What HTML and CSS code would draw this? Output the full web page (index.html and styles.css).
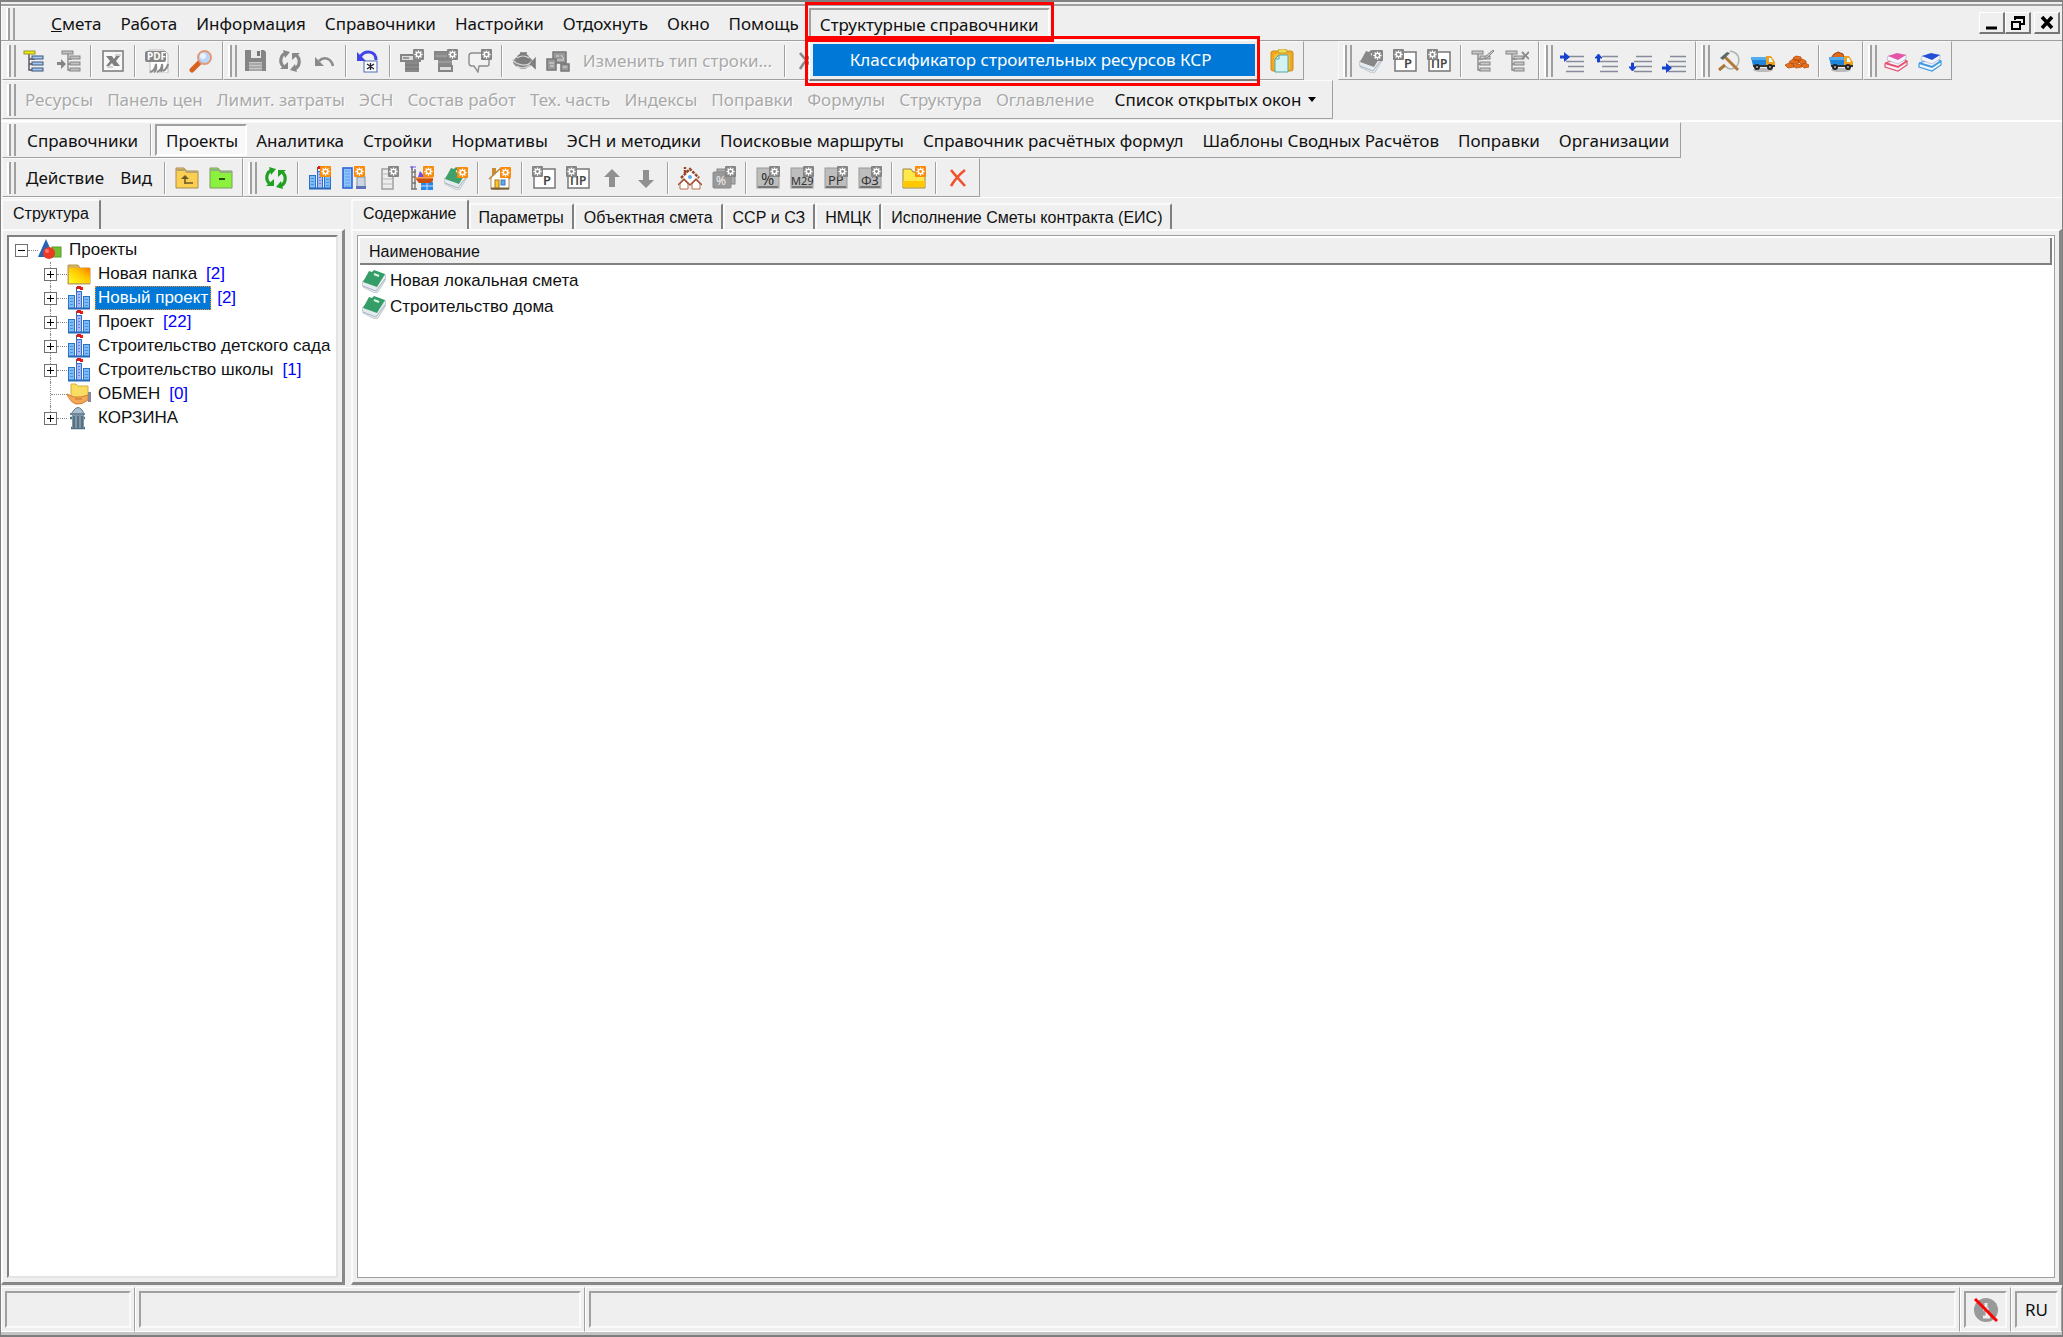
FILE: index.html
```html
<!DOCTYPE html>
<html lang="ru">
<head>
<meta charset="utf-8">
<title>Проекты</title>
<link rel="stylesheet" href="styles.css">
</head>
<body>
<svg class="sprite" aria-hidden="true">
  <symbol id="gear" viewBox="0 0 12 12"><rect width="12" height="12" rx="1" fill="#fa8a0a"/><path d="M6 1.5v9M1.5 6h9M2.8 2.8l6.4 6.4M9.2 2.8L2.8 9.2" stroke="#fff" stroke-width="1.4"/><circle cx="6" cy="6" r="2.3" fill="#fa8a0a" stroke="#fff" stroke-width="1.5"/></symbol>
  <symbol id="gear-g" viewBox="0 0 12 12"><rect width="12" height="12" rx="1" fill="#858585"/><path d="M6 1.5v9M1.5 6h9M2.8 2.8l6.4 6.4M9.2 2.8L2.8 9.2" stroke="#fff" stroke-width="1.4"/><circle cx="6" cy="6" r="2.3" fill="#858585" stroke="#fff" stroke-width="1.5"/></symbol>
  <symbol id="tree" viewBox="0 0 24 24"><path d="M6 5v16h6M6 10h6M6 15h6" fill="none" stroke="#555" stroke-width="1.4"/><rect x="1" y="2" width="11" height="3" fill="#f0e800" stroke="#98982a"/><g fill="#a8c8f0" stroke="#38557c"><rect x="9" y="7" width="11" height="3"/><rect x="9" y="13" width="11" height="3"/><rect x="9" y="19" width="11" height="3"/></g></symbol>
  <symbol id="tree-in" viewBox="0 0 24 24"><path d="M11 5v16h4M11 10h4M11 15h4" fill="none" stroke="#8a8a8a" stroke-width="1.4"/><g fill="#c0c0c0" stroke="#858585"><rect x="5" y="2" width="11" height="3"/><rect x="13" y="7" width="10" height="3"/><rect x="13" y="13" width="10" height="3"/><rect x="13" y="19" width="10" height="3"/></g><path d="M0 13h4v-3l5 5-5 5v-4H0z" fill="#858585"/></symbol>
  <symbol id="xls" viewBox="0 0 24 24"><rect x="2" y="2" width="20" height="20" fill="#f8f8f8" stroke="#808080" stroke-width="1.6"/><path d="M5 7h6l2 3 2-3h4l-4 5 4 5h-6l-2-3-3 3H5l4-5z" fill="#808080"/><path d="M14 6h6M6 18h6" stroke="#aaa"/></symbol>
  <symbol id="pdf" viewBox="0 0 24 24"><path d="M4 1h15l4 4v19H5V12H4z" fill="#fff" stroke="#bbb"/><rect x="0" y="2" width="21" height="11" rx="2" fill="#858585"/><text x="2" y="11" font-size="10" font-weight="700" fill="#fff">PDF</text><path d="M5 23q5-1 6-8 1 7-2 8M12 23q5-2 5-8 1 5-1 8M18 22q4-2 5-7" fill="none" stroke="#8a8a8a" stroke-width="2"/></symbol>
  <symbol id="find" viewBox="0 0 24 24"><path d="M3 21l8-8" stroke="#d9621e" stroke-width="5" stroke-linecap="round"/><circle cx="15.500" cy="8.500" r="6.500" fill="#bcd6fb" stroke="#e09a7a" stroke-width="2"/><circle cx="14" cy="7" r="3" fill="#e8f2ff"/></symbol>
  <symbol id="save" viewBox="0 0 24 24"><path d="M1 1h19l2 2v19H1z" fill="#858585"/><path d="M7 1h10v8H7z" fill="#e8e8e8"/><path d="M13 2h3v5h-3z" fill="#777"/><path d="M5 13h13v9H5z" fill="#c8c8c8"/><path d="M5 15h13M5 18h13M5 21h13" stroke="#888"/></symbol>
  <symbol id="cycle" viewBox="0 0 24 24"><path d="M8 4C2 6 1 14 6 18M16 20c6-2 7-10 2-14" fill="none" stroke="currentColor" stroke-width="3.200"/><path d="M5 1l7 2-5 6zM19 23l-7-2 5-6zM2 20h8v-7zM22 4h-8v7z" fill="currentColor"/></symbol>
  <symbol id="undo" viewBox="0 0 24 24"><path d="M7 12c5-5 12-3 14 5" fill="none" stroke="#8a8a8a" stroke-width="2.600"/><path d="M3 8v9h9z" fill="#8a8a8a"/></symbol>
  <symbol id="undo-doc" viewBox="0 0 24 24"><path d="M4 8c5-8 16-6 16 3" fill="none" stroke="#4343ea" stroke-width="3"/><path d="M1 3v9h9z" fill="#4343ea"/><rect x="8" y="12" width="13" height="11" fill="#fff" stroke="#4d6cb5"/><path d="M14.500 14v7M11 15l7 5M18 15l-7 5" stroke="#223" stroke-width="1.300"/></symbol>
  <symbol id="rows-top" viewBox="0 0 24 24"><rect x="1" y="6" width="19" height="6" fill="#ddd" stroke="#858585" stroke-width="2"/><path d="M3 9h6" stroke="#555"/><path d="M5 13h14v10H5z" fill="#8a8a8a"/><path d="M5 16h14M5 20h14" stroke="#777"/><use href="#gear-g" x="13" y="0" width="11" height="11"/></symbol>
  <symbol id="rows-bot" viewBox="0 0 24 24"><rect x="1" y="3" width="19" height="7" fill="#8a8a8a" stroke="#858585" stroke-width="2"/><path d="M4 11h14v6H4z" fill="#8a8a8a"/><path d="M1 7h19M4 13h14" stroke="#aaa"/><rect x="5" y="17" width="13" height="5" fill="#ddd" stroke="#858585" stroke-width="2"/><use href="#gear-g" x="13" y="0" width="11" height="11"/></symbol>
  <symbol id="note" viewBox="0 0 24 24"><path d="M4 4h15q2 0 2 2v9q0 2-2 2h-8l-1 6-4-6H4q-3 0-3-3V7q0-3 3-3z" fill="#f2f2f2" stroke="#8c8c8c" stroke-width="1.400"/><use href="#gear-g" x="13" y="0" width="11" height="11"/></symbol>
  <symbol id="planet" viewBox="0 0 24 24"><ellipse cx="11" cy="13" rx="10" ry="6" fill="#8c8c8c"/><ellipse cx="11" cy="12" rx="7" ry="8" fill="#7d7d7d"/><path d="M0 11q11 9 20 2M5 9q6-4 12 0M5 17q6 4 13-1" fill="none" stroke="#d6d6d6" stroke-width="1.200"/><path d="M19 15l4-5v9zM8 4h7" fill="#888" stroke="#777" stroke-width="1.500"/></symbol>
  <symbol id="blocks" viewBox="0 0 24 24"><g fill="#999" stroke="#777" stroke-width="1.500"><rect x="7" y="3" width="13" height="11"/><rect x="1" y="10" width="9" height="11"/><rect x="15" y="15" width="8" height="7"/></g><path d="M10 7h3M15 6l3 4M11 11h7M3 14h5M4 17h4M17 18h4" stroke="#ddd"/></symbol>
  <symbol id="cross" viewBox="0 0 24 24"><path d="M5 4q4 5 14 16M19 4Q11 10 5 20" fill="none" stroke="currentColor" stroke-width="2.600"/></symbol>
  <symbol id="clip" viewBox="0 0 24 24"><rect x="1" y="2" width="22" height="20" rx="2" fill="#f3a81c" stroke="#c98b1a"/><path d="M4 5h16v15H4z" fill="#f8bd38"/><rect x="8" y="0" width="9" height="4" rx="2" fill="#f2dc55" stroke="#c5a734"/><path d="M9 6h9v17H5V10z" fill="#d3f3f2" stroke="#57a3a6"/><path d="M5 10h4V6" fill="none" stroke="#57a3a6"/></symbol>
  <symbol id="book-shape" viewBox="0 0 24 24"><path d="M0 13l3-3 12 6 8-11 1 5-8 13-3 1-12-6z" fill="#e6ebef" stroke="#b4bec8" stroke-width=".8"/><path d="M1 17l13 5 9-12" fill="none" stroke="#a9b4c0"/><path d="M7 2l3 1 2-2 11 4-8 13-14-5z" fill="currentColor"/><path d="M12 5l5 2" stroke="#d9f5e4" stroke-width="2"/></symbol>
  <symbol id="book-new" viewBox="0 0 24 24"><use href="#book-shape" width="24" height="24"/><use href="#gear" x="13" y="1" width="11" height="11"/></symbol>
  <symbol id="book-new-g" viewBox="0 0 24 24"><use href="#book-shape" width="24" height="24"/><use href="#gear-g" x="13" y="1" width="11" height="11"/></symbol>
  <symbol id="p" viewBox="0 0 24 24"><rect x="2" y="3" width="21" height="19" fill="#fff" stroke="#777" stroke-width="1.500"/><text x="11" y="19" font-size="13" font-weight="600" fill="#444">Р</text><use href="#gear-g" width="11" height="11"/></symbol>
  <symbol id="pr" viewBox="0 0 24 24"><rect x="2" y="3" width="21" height="19" fill="#fff" stroke="#777" stroke-width="1.500"/><text x="4" y="19" font-size="12" font-weight="600" fill="#444">ПР</text><use href="#gear-g" width="11" height="11"/></symbol>
  <symbol id="tree-g" viewBox="0 0 24 24"><path d="M7 5v16h5M7 10h5M7 15h5" fill="none" stroke="#8a8a8a" stroke-width="1.400"/><g fill="#c8c8c8" stroke="#858585"><rect x="1" y="2" width="11" height="3"/><rect x="9" y="7" width="10" height="3"/><rect x="9" y="13" width="10" height="3"/><rect x="9" y="19" width="10" height="3"/></g></symbol>
  <symbol id="tree-edit" viewBox="0 0 24 24"><use href="#tree-g" width="24" height="24"/><path d="M13 10l2-3 7-6 1 1-7 7z" fill="#ccc" stroke="#858585"/></symbol>
  <symbol id="tree-del" viewBox="0 0 24 24"><use href="#tree-g" width="24" height="24"/><path d="M17 3l7 7M24 3l-7 7" stroke="#8a8a8a" stroke-width="1.800"/></symbol>
  <symbol id="lines" viewBox="0 0 24 24"><path d="M8 7.500h16M6 12.500h18M8 17.500h16M6 22.500h18" stroke="#868c9c" stroke-width="1.400"/></symbol>
  <symbol id="arr" viewBox="0 0 10 10"><path d="M0 3.500h4V0l6 5-6 5V6.500H0z" fill="#1742cf"/></symbol>
  <symbol id="ln-a" viewBox="0 0 24 24"><use href="#lines" width="24" height="24"/><use href="#arr" y="3" width="10" height="10"/></symbol>
  <symbol id="ln-b" viewBox="0 0 24 24"><use href="#lines" width="24" height="24"/><path d="M3.500 13V9H1l3.500-4L8 9H5.500v4z" fill="#1742cf" stroke="#1742cf"/></symbol>
  <symbol id="ln-c" viewBox="0 0 24 24"><use href="#lines" width="24" height="24"/><path d="M3.500 14v4H1l3.500 4L8 18H5.500v-4z" fill="#1742cf" stroke="#1742cf"/></symbol>
  <symbol id="ln-d" viewBox="0 0 24 24"><use href="#lines" width="24" height="24"/><use href="#arr" y="14" width="10" height="10"/></symbol>
  <symbol id="tools" viewBox="0 0 24 24"><path d="M13 2c12 2 11 15 2 18-4 0-5-1-7-3" fill="none" stroke="#a8b4b4" stroke-width="1.600"/><path d="M2 21l6-5" stroke="#a97435" stroke-width="3"/><path d="M7 7l14 14" stroke="#b77a36" stroke-width="3"/><path d="M3 9l7-6 3 1-7 7z" fill="#5c6b6b"/></symbol>
  <symbol id="truck" viewBox="0 0 24 24"><ellipse cx="12" cy="21" rx="10" ry="2" fill="#bbb"/><path d="M0 8h15v9H2z" fill="#1f86da"/><path d="M0 8h15v3H0z" fill="#54adf0"/><path d="M15 7h5l4 6v4h-9z" fill="#f0a020"/><path d="M18 9h2l2 4h-4z" fill="#dff"/><path d="M2 17h22" stroke="#333" stroke-width="2"/><circle cx="6" cy="18" r="3" fill="#222"/><circle cx="19" cy="18" r="3" fill="#222"/><circle cx="6" cy="18" r="1" fill="#bbb"/><circle cx="19" cy="18" r="1" fill="#bbb"/></symbol>
  <symbol id="bricks" viewBox="0 0 24 24"><g fill="#e8701a" stroke="#b84c0a" stroke-width=".8"><path d="M8 9l3-2 5 1v3l-6 1zM4 13l4-3 6 1v3l-6 1zM13 12l4-2 4 2v2l-5 1zM0 16l4-2 5 1v3l-6 1zM8 17l4-2 5 1v2l-6 1zM16 16l4-2 4 2v2l-5 1z"/></g></symbol>
  <symbol id="truck-full" viewBox="0 0 24 24"><path d="M2 9l3-4 4-2 5 2 1 4z" fill="#e06a18" stroke="#9b420e"/><use href="#truck" width="24" height="24"/></symbol>
  <symbol id="stack" viewBox="0 0 24 24"><path d="M4 13l-3 2v3l13 4 9-6v-4l-4-2z" fill="#f4f4fb" stroke="currentColor" stroke-width="1.200"/><path d="M1 14l13 4 9-6" fill="none" stroke="currentColor" stroke-width="2"/><path d="M4 7l-1 4 11 4 8-5V6z" fill="#f4f4fb" stroke="#b8b8cc" stroke-width=".8"/><path d="M4 7l9-3 9 2-8 5z" fill="var(--cover)"/></symbol>
  <symbol id="fold-up" viewBox="0 0 24 24"><path d="M1 22V2h8l2 3h12v17z" fill="#fbd052" stroke="#a88c4c"/><path d="M1 4h9l2 2h11" fill="none" stroke="#b9a36c" stroke-width="2"/><path d="M10 18V11M10 17h8" stroke="#6b5a28" stroke-width="1.600" fill="none"/><path d="M6 13l4-4 4 4z" fill="#6b5a28"/></symbol>
  <symbol id="fold-minus" viewBox="0 0 24 24"><path d="M1 22V2h8l2 3h12v17z" fill="#8af23c" stroke="#7a9c66"/><path d="M1 4h9l2 2h11" fill="none" stroke="#93ac80" stroke-width="2"/><path d="M10 13h6" stroke="#274d10" stroke-width="2"/></symbol>
  <symbol id="build-shape" viewBox="0 0 24 24"><path d="M9.500 6V1" stroke="#555"/><path d="M10 0h4v1h2v3h-3V3h-3z" fill="#e81818"/><g fill="#7dbcf6" stroke="#2b73c6"><rect x="1.500" y="9.500" width="6" height="13"/><rect x="16.500" y="10.500" width="6" height="12"/><rect x="9.500" y="5.500" width="5" height="17" fill="#a9b9f7"/></g><path d="M3 12.500h3M3 15.500h3M3 18.500h3M18 13.500h3M18 16.500h3M18 19.500h3" stroke="#4b90de"/><path d="M11 8.500h2M11 11.500h2M11 14.500h2M11 17.500h2" stroke="#6a7fe0"/><path d="M1 22.500h22" stroke="#2568b8" stroke-width="2"/></symbol>
  <symbol id="build-new" viewBox="0 0 24 24"><use href="#build-shape" width="24" height="24"/><use href="#gear" x="12" width="11" height="11"/></symbol>
  <symbol id="cols-new" viewBox="0 0 24 24"><rect x="1" y="2" width="9" height="20" fill="#90c4fa" stroke="#2b62d8" stroke-width="1.600"/><path d="M3 5h5M3 8h5M3 11h5M3 14h5M3 17h5M3 20h5" stroke="#5a9cea"/><rect x="15" y="11" width="8" height="11" fill="#ccd6e2" stroke="#8391a4"/><path d="M14 20h10v3H14z" fill="#5f74b8"/><use href="#gear" x="12" width="11" height="11"/></symbol>
  <symbol id="col-g" viewBox="0 0 24 24"><rect x="6" y="3" width="11" height="20" fill="#ececec" stroke="#a0a0a0" stroke-width="1.500"/><path d="M7 8h9M7 13h9M7 18h9" stroke="#b8b8b8"/><use href="#gear-g" x="12" width="11" height="11"/></symbol>
  <symbol id="site" viewBox="0 0 24 24"><path d="M2 1v22M5 3v20M2 6h4M2 11h4M2 17h4M1 23h6" stroke="#777" stroke-width="1.400"/><path d="M0 1h6M2 0v4" stroke="#7755e8"/><path d="M11 16h12v8H11z" fill="#2889e8"/><path d="M11 20h12M17 16v8" stroke="#cdf"/><path d="M5 12h18v3l-3 2H9z" fill="#c8500c"/><path d="M5 12h18" stroke="#f58a34" stroke-width="1.500"/><path d="M10 5l5 6H8z" fill="#7a4be0"/><use href="#gear" x="13" width="11" height="11"/></symbol>
  <symbol id="house" viewBox="0 0 24 24"><path d="M4 2h4v8H4z" fill="#c98c35"/><path d="M3 11l9-8 9 8v12H3z" fill="#fff" stroke="#b08a5a"/><path d="M1 13L12 3l10 10" fill="none" stroke="#ba8842" stroke-width="1.600"/><rect x="7" y="14" width="4" height="9" fill="#ffc428" stroke="#a87410"/><rect x="13" y="14" width="4" height="5" fill="#64a8ee" stroke="#4176b0"/><path d="M3 22.500h18" stroke="#79603c" stroke-width="2"/><use href="#gear" x="12" y="1" width="11" height="11"/></symbol>
  <symbol id="up" viewBox="0 0 24 24"><path d="M12 3l8 8h-5v10H9V11H4z" fill="#909090"/></symbol>
  <symbol id="down" viewBox="0 0 24 24"><path d="M12 22l8-8h-5V4H9v10H4z" fill="#909090"/></symbol>
  <symbol id="houses" viewBox="0 0 24 24"><path d="M5 11l7-8 7 8v7H5z" fill="#fff"/><path d="M3 12l9-9 9 9M7 7V1" fill="none" stroke="#98492c" stroke-width="2.500" stroke-dasharray="3 1"/><path d="M2 18l4-4 4 4v5H2zM14 18l4-4 4 4v5h-8z" fill="#fff" stroke="#bb7050"/><path d="M0 19l6-6 6 6 6-6 6 6" fill="none" stroke="#a25434" stroke-width="1.500"/><circle cx="12" cy="11" r="2" fill="#5cabf0"/></symbol>
  <symbol id="coins" viewBox="0 0 24 24"><rect x="5" y="3" width="18" height="15" fill="#aaa" stroke="#888"/><rect x="1" y="6" width="18" height="16" rx="1" fill="#999" stroke="#888"/><text x="4" y="19" font-size="12" fill="#eee">%</text><use href="#gear-g" x="13" width="11" height="11"/></symbol>
  <symbol id="tile" viewBox="0 0 24 24"><rect x="1" y="2" width="22" height="20" fill="#bdbdbd" stroke="#999"/><path d="M2 21h20" stroke="#777" stroke-width="2"/></symbol>
  <symbol id="t-pct" viewBox="0 0 24 24"><use href="#tile" width="24" height="24"/><text x="5" y="19" font-size="16" fill="#333">%</text><use href="#gear-g" x="13" width="11" height="11"/></symbol>
  <symbol id="t-m29" viewBox="0 0 24 24"><use href="#tile" width="24" height="24"/><text x="1" y="19" font-size="11" fill="#333">М29</text><use href="#gear-g" x="13" width="11" height="11"/></symbol>
  <symbol id="t-pp" viewBox="0 0 24 24"><use href="#tile" width="24" height="24"/><text x="4" y="19" font-size="13" fill="#333">РР</text><use href="#gear-g" x="13" width="11" height="11"/></symbol>
  <symbol id="t-fz" viewBox="0 0 24 24"><use href="#tile" width="24" height="24"/><text x="3" y="19" font-size="13" fill="#333">ФЗ</text><use href="#gear-g" x="13" width="11" height="11"/></symbol>
  <symbol id="fold-new" viewBox="0 0 24 24"><path d="M1 22V3h8l2 3h12v16z" fill="#ffe94a" stroke="#9c8740"/><path d="M1 15h22v6H1z" fill="#ffc800"/><use href="#gear" x="13" width="11" height="11"/></symbol>
  <symbol id="shapes" viewBox="0 0 24 24"><rect x="14" y="9" width="9" height="10" fill="#72bd32" stroke="#5a9c26"/><path d="M8 1l8 18H0z" fill="#2563b4"/><circle cx="11" cy="15" r="6" fill="#ea3a22"/><circle cx="9" cy="13" r="2" fill="#f77"/></symbol>
  <symbol id="hand" viewBox="0 0 24 24"><path d="M4 2h5l2 2h10v12H4z" fill="#f9dd62" stroke="#d6ae3a"/><path d="M0 12l7 3h7l7-2v5q-6 5-12 4Q3 20 0 12z" fill="#f4a95a" stroke="#d47f34"/><path d="M8 17h7" stroke="#c87028"/><path d="M21 10h3v10h-3z" fill="#889"/></symbol>
  <symbol id="bin" viewBox="0 0 24 24"><path d="M7 4q4-5 8 0l2 4H4z" fill="#aac0d0" stroke="#678"/><path d="M3 8h15" stroke="#6d8798" stroke-width="2"/><path d="M3 12h15M4 22h14" stroke="#506e82" stroke-width="2.400"/><path d="M5 9h12v13H5z" fill="#7f98a8"/><path d="M7 10v12M11 10v12M15 10v12" stroke="#3e596c" stroke-width="1.200"/></symbol>
</svg>

<div class="app">
  <header class="line menu-line">
    <nav class="band menu" aria-label="Главное меню">
      <i class="grip"></i>
      <button><u>С</u>мета</button><button>Работа</button><button>Информация</button><button>Справочники</button><button>Настройки</button><button>Отдохнуть</button><button>Окно</button><button>Помощь</button>
      <div class="drop">
        <button class="sunk open" aria-expanded="true">Структурные справочники</button>
        <div class="popup"><button>Классификатор строительных ресурсов КСР</button></div>
        <i class="mark mark-menu"></i><i class="mark mark-popup"></i>
      </div>
    </nav>
    <div class="winbtns">
      <button aria-label="Свернуть"><svg viewBox="0 0 16 16"><path d="M2 13h11" stroke="#000" stroke-width="3"/></svg></button>
      <button aria-label="Восстановить"><svg viewBox="0 0 16 16"><path d="M5 5V2h9v7h-3M5 3h9M1 7h10" fill="none" stroke="#000" stroke-width="2"/><path d="M2 7h8v7H2z" fill="none" stroke="#000" stroke-width="2"/></svg></button>
      <button class="close" aria-label="Закрыть"><svg viewBox="0 0 16 16"><path d="M3 2l10 11M13 2L3 13" stroke="#000" stroke-width="3.500"/></svg></button>
    </div>
  </header>

  <div class="line">
    <div class="band tools">
      <i class="grip"></i>
      <button aria-label="Дерево"><svg><use href="#tree"/></svg></button><button aria-label="В дерево"><svg><use href="#tree-in"/></svg></button><i class="sep"></i>
      <button aria-label="Excel"><svg><use href="#xls"/></svg></button><i class="sep"></i>
      <button aria-label="PDF"><svg><use href="#pdf"/></svg></button><i class="sep"></i>
      <button aria-label="Поиск"><svg><use href="#find"/></svg></button>
    </div>
    <div class="band tools main-tools">
      <i class="grip"></i>
      <button aria-label="Сохранить"><svg><use href="#save"/></svg></button><button class="gray" aria-label="Обновить"><svg><use href="#cycle"/></svg></button><button aria-label="Отменить"><svg><use href="#undo"/></svg></button><i class="sep"></i>
      <button aria-label="Вернуть документ"><svg><use href="#undo-doc"/></svg></button><i class="sep"></i>
      <button aria-label="Строка выше"><svg><use href="#rows-top"/></svg></button><button aria-label="Строка ниже"><svg><use href="#rows-bot"/></svg></button><button aria-label="Примечание"><svg><use href="#note"/></svg></button><i class="sep"></i>
      <button aria-label="Ресурс"><svg><use href="#planet"/></svg></button><button aria-label="Блоки"><svg><use href="#blocks"/></svg></button>
      <button class="label" disabled>Изменить тип строки...</button><i class="sep"></i>
      <button class="gray" aria-label="Удалить строку"><svg><use href="#cross"/></svg></button>
      <button class="last" aria-label="Вставить"><svg><use href="#clip"/></svg></button>
    </div>
    <div class="band tools spaced">
      <i class="grip"></i>
      <button class="gray" aria-label="Новая смета"><svg><use href="#book-new-g"/></svg></button><button aria-label="Раздел"><svg><use href="#p"/></svg></button><button aria-label="Подраздел"><svg><use href="#pr"/></svg></button><i class="sep"></i>
      <button aria-label="Изменить структуру"><svg><use href="#tree-edit"/></svg></button><button aria-label="Удалить структуру"><svg><use href="#tree-del"/></svg></button>
    </div>
    <div class="band tools">
      <i class="grip"></i>
      <button aria-label="Влево"><svg><use href="#ln-a"/></svg></button><button aria-label="Вверх"><svg><use href="#ln-b"/></svg></button><button aria-label="Вниз"><svg><use href="#ln-c"/></svg></button><button aria-label="Вправо"><svg><use href="#ln-d"/></svg></button>
    </div>
    <div class="band tools">
      <i class="grip"></i>
      <button aria-label="Труд"><svg><use href="#tools"/></svg></button><button aria-label="Машины"><svg><use href="#truck"/></svg></button><button aria-label="Материалы"><svg><use href="#bricks"/></svg></button><i class="sep"></i>
      <button aria-label="Перевозка"><svg><use href="#truck-full"/></svg></button>
    </div>
    <div class="band tools">
      <i class="grip"></i>
      <button class="pink" aria-label="Сборник 1"><svg><use href="#stack"/></svg></button><button class="blue" aria-label="Сборник 2"><svg><use href="#stack"/></svg></button>
    </div>
  </div>

  <div class="line panels-line">
    <nav class="band panels" aria-label="Панели">
      <i class="grip"></i>
      <button disabled>Ресурсы</button><button disabled>Панель цен</button><button disabled>Лимит. затраты</button><button disabled>ЭСН</button><button disabled>Состав работ</button><button disabled>Тех. часть</button><button disabled>Индексы</button><button disabled>Поправки</button><button disabled>Формулы</button><button disabled>Структура</button><button disabled>Оглавление</button><button class="opens">Список открытых окон<i class="caret"></i></button>
    </nav>
  </div>

  <div class="line books-line">
    <nav class="band books" aria-label="Разделы">
      <i class="grip"></i>
      <button>Справочники</button><i class="sep"></i><button class="sunk on">Проекты</button><button>Аналитика</button><button>Стройки</button><button>Нормативы</button><button>ЭСН и методики</button><button>Поисковые маршруты</button><button>Справочник расчётных формул</button><button>Шаблоны Сводных Расчётов</button><button>Поправки</button><button>Организации</button>
    </nav>
  </div>

  <div class="line">
    <div class="band tools">
      <i class="grip"></i>
      <button class="word">Действие</button><button class="word">Вид</button><i class="sep"></i>
      <button aria-label="Вверх"><svg><use href="#fold-up"/></svg></button><button aria-label="Свернуть"><svg><use href="#fold-minus"/></svg></button>
    </div>
    <div class="band tools">
      <i class="grip"></i>
      <button class="green" aria-label="Обновить"><svg><use href="#cycle"/></svg></button><i class="sep"></i>
      <button aria-label="Новый проект"><svg><use href="#build-new"/></svg></button><button aria-label="Новая очередь"><svg><use href="#cols-new"/></svg></button><button aria-label="Новый корпус"><svg><use href="#col-g"/></svg></button><button aria-label="Новая стройка"><svg><use href="#site"/></svg></button><button class="leaf" aria-label="Новая смета"><svg><use href="#book-new"/></svg></button><i class="sep"></i>
      <button aria-label="Новый объект"><svg><use href="#house"/></svg></button><i class="sep"></i>
      <button aria-label="Раздел"><svg><use href="#p"/></svg></button><button aria-label="Подраздел"><svg><use href="#pr"/></svg></button><button aria-label="Выше"><svg><use href="#up"/></svg></button><button aria-label="Ниже"><svg><use href="#down"/></svg></button><i class="sep"></i>
      <button aria-label="Объектная смета"><svg><use href="#houses"/></svg></button><button aria-label="Индексы"><svg><use href="#coins"/></svg></button><i class="sep"></i>
      <button aria-label="Проценты"><svg><use href="#t-pct"/></svg></button><button aria-label="М29"><svg><use href="#t-m29"/></svg></button><button aria-label="РР"><svg><use href="#t-pp"/></svg></button><button aria-label="ФЗ"><svg><use href="#t-fz"/></svg></button><i class="sep"></i>
      <button aria-label="Новая папка"><svg><use href="#fold-new"/></svg></button><i class="sep"></i>
      <button class="red" aria-label="Удалить"><svg><use href="#cross"/></svg></button>
    </div>
  </div>

  <main class="work">
    <section class="side">
      <div class="tabs"><button class="tab active">Структура</button></div>
      <div class="sheet">
        <ul class="tree">
          <li class="root"><i class="box"></i><i class="dots"></i><svg><use href="#shapes"/></svg><span>Проекты</span></li>
          <li><i class="box plus"></i><i class="dots"></i><svg viewBox="0 0 24 24"><linearGradient id="sun" x2="1" y1="1" y2="0"><stop stop-color="#ffff1c"/><stop offset=".6" stop-color="#ffc400"/><stop offset="1" stop-color="#ff7800"/></linearGradient><path d="M1 22V3h10l2 3h10v16z" fill="#d8b458" stroke="#b89858"/><path d="M2 6h21v15H2z" fill="url(#sun)"/></svg><span>Новая папка</span><b>[2]</b></li>
          <li><i class="box plus"></i><i class="dots"></i><svg><use href="#build-shape"/></svg><span class="picked">Новый проект</span><b>[2]</b></li>
          <li><i class="box plus"></i><i class="dots"></i><svg><use href="#build-shape"/></svg><span>Проект</span><b>[22]</b></li>
          <li><i class="box plus"></i><i class="dots"></i><svg><use href="#build-shape"/></svg><span>Строительство детского сада</span></li>
          <li><i class="box plus"></i><i class="dots"></i><svg><use href="#build-shape"/></svg><span>Строительство школы</span><b>[1]</b></li>
          <li class="leafrow"><i class="dots"></i><svg><use href="#hand"/></svg><span>ОБМЕН</span><b>[0]</b></li>
          <li><i class="box plus"></i><i class="dots"></i><svg><use href="#bin"/></svg><span>КОРЗИНА</span></li>
        </ul>
      </div>
    </section>
    <section class="content">
      <div class="tabs"><button class="tab active">Содержание</button><button class="tab">Параметры</button><button class="tab">Объектная смета</button><button class="tab">ССР и СЗ</button><button class="tab">НМЦК</button><button class="tab">Исполнение Сметы контракта (ЕИС)</button></div>
      <div class="sheet">
        <div class="listbox">
          <table>
            <thead><tr><th>Наименование</th></tr></thead>
            <tbody>
              <tr><td><div class="cell"><svg><use href="#book-shape"/></svg>Новая локальная смета</div></td></tr>
              <tr><td><div class="cell"><svg><use href="#book-shape"/></svg>Строительство дома</div></td></tr>
            </tbody>
          </table>
        </div>
      </div>
    </section>
  </main>

  <footer class="status">
    <div class="pane p1"><span></span></div>
    <div class="pane p2"><span></span></div>
    <div class="pane fill"><span></span></div>
    <div class="pane small"><span><svg viewBox="0 0 24 24"><circle cx="12" cy="12" r="12" fill="#999"/><path d="M12 5v4M9 11h4v8M9 19h7" stroke="#eee" stroke-width="3" fill="none"/><path d="M1 1l22 22" stroke="#f00" stroke-width="3"/></svg></span></div>
    <div class="pane small"><span>RU</span></div>
  </footer>
</div>
</body>
</html>
```
FILE: styles.css
```css
* { box-sizing: border-box; }

body {
  margin: 0;
  background: #efefef;
  color: #111;
  font-family: "Noto Sans", "Open Sans", sans-serif;
  font-size: 17px;
}

button {
  margin: 0;
  border: 0;
  padding: 0;
  background: none;
  color: inherit;
  font: inherit;
  white-space: nowrap;
}

button:disabled { color: #a9a9a9; text-shadow: 1px 1px 0 #fff; }

i, b { font-style: normal; font-weight: 400; }

.sprite { display: none; }

.app {
  display: flex;
  flex-direction: column;
  min-height: 100vh;
  border: 1px solid #808080;
  border-top-width: 2px;
  border-bottom: 2px solid #7c7c7c;
}

/* Toolbars */
.line { display: flex; height: 39px; padding-left: 1px; }

.band {
  display: flex;
  align-items: center;
  border-right: 1px solid #a0a0a0;
  border-bottom: 1px solid #a0a0a0;
  border-top: 1px solid #fafafa;
  border-left: 1px solid #fafafa;
}

.grip {
  flex: none;
  width: 7px;
  height: 32px;
  margin: 0 2px 0 6px;
  border: solid #a0a0a0;
  border-width: 0 2px;
  box-shadow: -2px 0 0 #fff, inset 3px 0 0 #efefef, inset -2px 0 0 #fff;
}

.sep {
  flex: none;
  width: 2px;
  height: 32px;
  margin: 0 4px;
  background: #a0a0a0;
  border-right: 1px solid #fff;
}

.menu-line {
  height: 37px;
  border-top: 2px solid #a0a0a0;
  margin-top: 2px;
  padding-left: 0;
  border-bottom: 1px solid #a0a0a0;
  align-items: center;
}

.menu { height: 100%; border-right: 0; border-bottom: 0; }
.menu .grip { margin-right: 27px; }
.menu > button, .books > button { padding: 0 10px 0 9px; }
.menu .open { height: 32px; padding: 2px 9px 0; }

.sunk {
  border: 2px solid #a0a0a0;
  border-right-color: #fff;
  border-bottom-color: #fff;
}

.drop { position: relative; }

.popup {
  position: absolute;
  z-index: 2;
  left: 0;
  top: 32px;
  padding: 3px;
  background: #efefef;
  border: 1px solid #fff;
  border-right: 2px solid #777;
  border-bottom: 2px solid #777;
}

.popup button {
  width: 442px;
  height: 32px;
  padding-left: 37px;
  background: #0078d7;
  color: #fff;
  text-align: left;
}

.mark {
  position: absolute;
  z-index: 3;
  left: -4px;
  border: 3px solid #f00;
  pointer-events: none;
}

.mark-menu { top: -6px; width: 249px; height: 40px; }
.mark-popup { top: 28px; width: 455px; height: 50px; }

.winbtns { display: flex; margin: 0 2px 0 auto; }

.winbtns button {
  display: flex;
  justify-content: center;
  align-items: center;
  width: 26px;
  height: 22px;
  background: #efefef;
  border: 1px solid #fff;
  border-right: 2px solid #777;
  border-bottom: 2px solid #777;
}

.winbtns .close { margin-left: 3px; }
.winbtns svg { width: 16px; height: 16px; }

.tools { padding-right: 4px; }
.tools button { flex: none; display: flex; justify-content: center; width: 34px; }
.tools svg { width: 24px; height: 24px; }
.tools .label { width: 205px; }
.tools .word { width: auto; padding: 0 8px; }
.tools .last { margin-left: auto; }
.main-tools { flex: 0 0 1081px; }
.spaced { margin-left: 34px; }

.gray { color: #888; }
.green { color: #22a022; }
.leaf { color: #3fa06a; }
.red { color: #f0502c; }
.pink { color: #e8506c; --cover: #e455a8; }
.blue { color: #3a9be0; --cover: #2450d8; }

.panels > button { padding: 0 7px; }
.panels > .opens { padding: 0 11px 0 13px; }
.panels-line { height: 40px; padding-bottom: 1px; }

.caret {
  display: inline-block;
  margin: 0 5px 4px 7px;
  border: 4px solid transparent;
  border-top: 5px solid #000;
  border-bottom: 0;
}

.books-line { height: 38px; border-top: 2px solid #fff; }
.books { padding-right: 1px; }
.books .sep { margin: 0 3px 0 2px; }
.books > .on { height: 32px; padding: 1px 7px 0 9px; background: #f8f8f8; }

/* Work area */
.work {
  flex: 1;
  display: flex;
  gap: 6px;
  border-top: 1px solid #fff;
  font-family: "Liberation Sans", Arial, sans-serif;
}

.side { flex: none; width: 344px; display: flex; flex-direction: column; }
.content { flex: 1; display: flex; flex-direction: column; }

.tabs { display: flex; align-items: flex-end; height: 31px; font-size: 16px; }

.tab {
  height: 26px;
  padding: 2px 8px 0;
  border: 2px solid #fafafa;
  border-right-color: #808080;
  border-bottom: 0;
  border-radius: 2px 2px 0 0;
}

.tab.active { height: 30px; padding: 0 10px 2px; }

.sheet {
  flex: 1;
  display: flex;
  padding: 4px;
  border: 2px solid #fcfcfc;
  border-right: 3px solid #888;
  border-bottom: 3px solid #888;
}

.tree {
  flex: 1;
  margin: 0;
  padding: 1px 0 0 6px;
  list-style: none;
  background: #fff;
  border: 2px solid #808080;
  border-right-color: #e4e4e4;
  border-bottom-color: #e4e4e4;
}

.tree li { display: flex; align-items: center; height: 24px; padding-left: 29px; position: relative; }
.tree .root { padding-left: 0; }
.tree svg { flex: none; width: 24px; height: 24px; margin-right: 4px; }
.tree span { padding: 2px 3px; line-height: 20px; white-space: nowrap; }
.tree b { margin-left: 6px; color: #00f; }
.tree .picked { background: #0078d7; color: #fff; outline: 1px dotted #f08a28; outline-offset: -1px; }

.box {
  position: relative;
  z-index: 1;
  flex: none;
  width: 13px;
  height: 13px;
  border: 1px solid #707070;
  background: linear-gradient(#000, #000) center / 7px 1px no-repeat #fff;
}

.plus {
  background: linear-gradient(#000, #000) center / 7px 1px no-repeat, linear-gradient(#000, #000) center / 1px 7px no-repeat, #fff;
}

.dots { width: 10px; border-top: 1px dotted #888; }
.leafrow .dots { width: 16px; margin-left: 7px; }

.tree li:not(.root)::before {
  content: "";
  position: absolute;
  left: 35px;
  top: 0;
  bottom: 0;
  border-left: 1px dotted #888;
}

.tree li:last-child::before { bottom: 12px; }

.listbox {
  flex: 1;
  padding: 2px;
  background: #fff;
  border: 1px solid #a0a0a0;
}

table { width: 100%; border-collapse: separate; border-spacing: 0; }

th {
  height: 27px;
  padding: 2px 9px 0;
  background: #efefef;
  border-right: 2px solid #808080;
  border-bottom: 2px solid #808080;
  text-align: left;
  font-size: 16px;
  font-weight: 400;
}

td { padding: 0 2px; }
tbody tr:first-child td { padding-top: 3px; }
.cell { display: flex; align-items: center; gap: 4px; height: 26px; }
.cell svg { width: 24px; height: 24px; color: #359e68; }

/* Status bar */
.status {
  display: flex;
  flex: none;
  height: 48px;
  margin-top: 2px;
  border-bottom: 3px solid #c4c4c4;
}

.pane { padding: 3px; border: 1px solid #fff; border-right: 1px solid #a0a0a0; }
.pane span {
  display: flex;
  align-items: center;
  justify-content: center;
  height: 100%;
  border: 2px solid #a0a0a0;
  border-right-color: #fafafa;
  border-bottom-color: #fafafa;
}

.p1 { width: 134px; }
.p2 { width: 450px; }
.fill { flex: 1; }
.small { width: 51px; }
.small svg { width: 24px; height: 24px; }
```
